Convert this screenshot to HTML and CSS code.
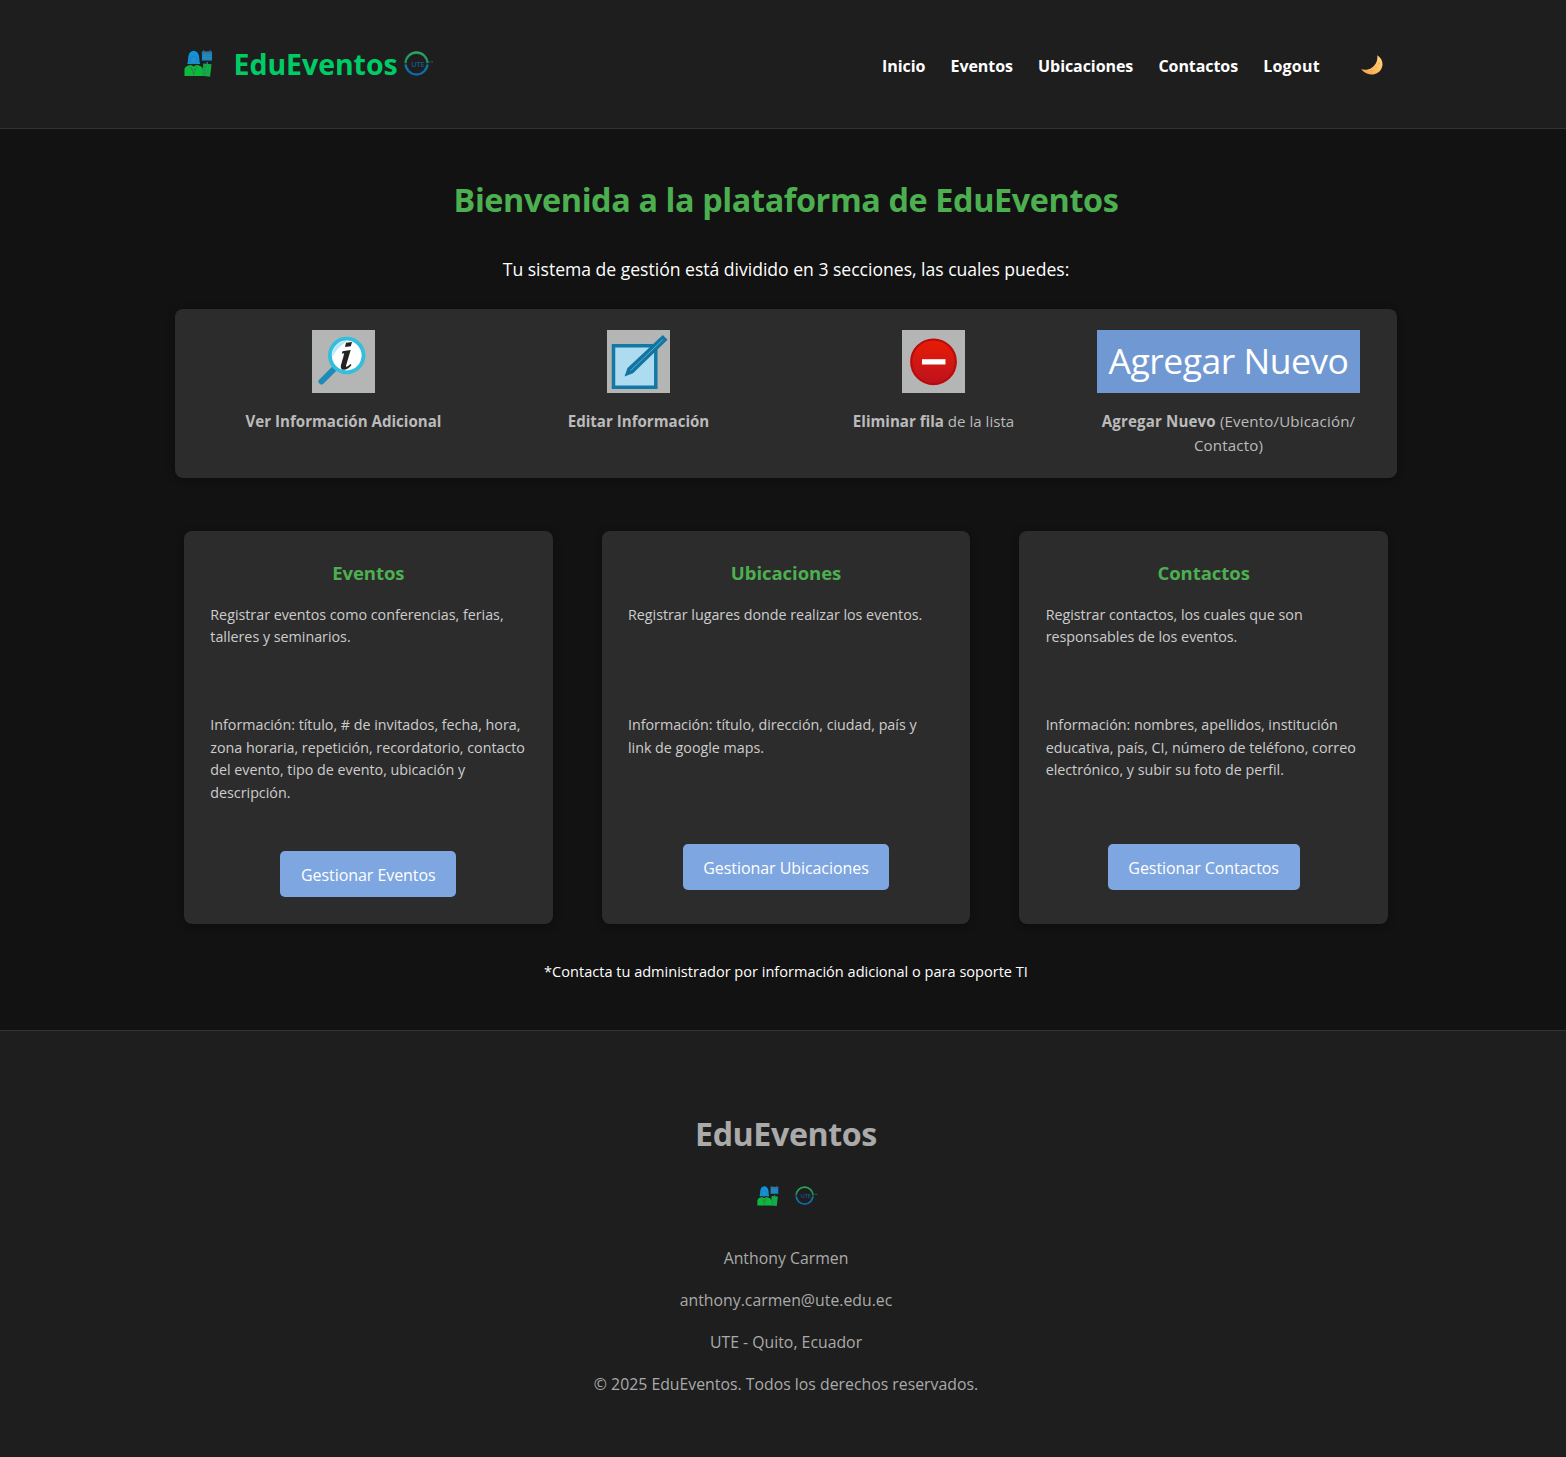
FILE: index.html
```html
<!DOCTYPE html>
<html lang="es">
<head>
<meta charset="utf-8">
<title>EduEventos</title>
<link rel="stylesheet" href="styles.css">
</head>
<body>
<svg class="defs" width="0" height="0" aria-hidden="true">
  <defs>
    <linearGradient id="ring" x1="0" y1="0" x2="0" y2="1">
      <stop offset="0" stop-color="#2aa65c"/><stop offset=".45" stop-color="#1b8c68"/>
      <stop offset=".6" stop-color="#1474a0"/><stop offset="1" stop-color="#0b69ab"/>
    </linearGradient>
    <linearGradient id="moon" x1="0" y1="1" x2="1" y2="0">
      <stop offset="0" stop-color="#f79a4c"/><stop offset=".6" stop-color="#ffc666"/><stop offset="1" stop-color="#ffd584"/>
    </linearGradient>
    <linearGradient id="red" x1="0" y1="0" x2="0" y2="1">
      <stop offset="0" stop-color="#e81c04"/><stop offset="1" stop-color="#bd1220"/>
    </linearGradient>
  </defs>
  <symbol id="logo" viewBox="0 0 30 30">
    <path d="M3.300 15.500C4.500 13 4 10 4.500 7.500 5.200 4 7 1.700 10 1.700s5 2.300 5.600 5.800c.5 2.500 0 5.500 1.200 8z" fill="#0d92dc"/>
    <path d="M6.500 9.500c2-.5 3-1.500 3.500-2.500.8 1.200 2 2 3.500 2.500 0 3.500-1.500 6-3.500 6s-3.500-2.500-3.500-6z" fill="#1e8fd2" stroke="#46697c" stroke-width=".6"/>
    <path d="M.5 28v-6.500c0-2.500 1.500-4 6.500-5.300l3 2 3-2c5 1.300 6.500 2.800 6.500 5.300V28z" fill="#0cba3b"/>
    <path d="M6.500 17 10 26l3.500-9M10 26v2M7 20l3 1.500 3-1.500" fill="none" stroke="#3d7350" stroke-width=".8"/>
    <path d="M18.500 2.500h10.500v9.500h-10.500z" fill="#1685cf"/>
    <path d="M18.500 4H29M20.500 1v3M27 1v3" stroke="#506a7a" stroke-width="1"/>
    <path d="M20 9.500h3M24 9.500h3M20.500 7h2M24.500 6.500h2" stroke="#568b65" stroke-width="1.200"/>
    <path d="m20 15 8.500.8-1.500 13-8.500-1z" fill="#12ad42"/>
    <path d="M24 13.500v2.300M20.800 18.500l1.500.2M20.500 21.800l1.500.2M20 25l1.500.2" stroke="#3e6d9a" stroke-width="1.500"/>
  </symbol>
</svg>

<header class="header">
  <div class="header-inner">
    <div class="brand">
      <svg class="brand-logo"><use href="#logo"/></svg>
      <span class="brand-name">EduEventos</span>
      <svg class="brand-ute" viewBox="0 0 30 26">
        <circle cx="12.500" cy="12.500" r="11" fill="none" stroke="url(#ring)" stroke-width="2.300"/>
        <path d="M0 12.800h3M22 12.800h3" stroke="#1e1e1e" stroke-width="1.200"/>
        <text x="7.200" y="15.500" class="ute-text">UTE</text>
        <path d="M25.300 10.900h3.800" stroke="#255e39" stroke-width="1.400" stroke-dasharray="1.600 .5"/>
      </svg>
    </div>
    <nav class="nav">
      <a>Inicio</a><a>Eventos</a><a>Ubicaciones</a><a>Contactos</a><a class="nav-last">Logout</a>
      <svg class="moon" viewBox="0 0 22 20"><path d="M16.200.3c4.500 2.500 6.700 8 4.400 13C18.500 18 13.500 20.500 8.500 19.300 4.800 18.500 1.500 16.500.3 14c2.700 1.200 7 .9 10.400-1.300C15 10 17 5.500 16.200.3z" fill="url(#moon)"/><path d="M14.500 12l1 .8M10.500 15.500l1 .3M18 8v1" stroke="#eda44c" stroke-linecap="round"/></svg>
    </nav>
  </div>
</header>

<main class="main">
  <h1 class="title">Bienvenida a la plataforma de EduEventos</h1>
  <p class="subtitle">Tu sistema de gestión está dividido en 3 secciones, las cuales puedes:</p>

  <section class="panel">
    <div class="action">
      <svg class="action-icon" viewBox="0 0 63 63">
        <path d="M9.500 51.500 23 38" stroke="#1d8bba" stroke-width="6" stroke-linecap="round"/>
        <circle cx="34.700" cy="25.500" r="16.800" fill="#fff" stroke="#32bfdd" stroke-width="3.800"/>
        <path d="M20.300 27A14.800 14.800 0 0 1 36 10.800C30 14 24 20 20.300 27z" fill="#b9e7f7"/>
        <path d="m34 12.800 6-.8-1.200 4.300-5.800.8zM30.500 21.300l8.200-1.300-4.700 15.700c-.3 1.800 1.700 1.200 4.300-1.700l1.200 1c-3.200 4.700-10.700 7-10.700 1.700 0-1.800 2.700-9.500 3.400-13.400l-2.400.4z" fill="#222"/>
      </svg>
      <p class="caption"><strong>Ver Información Adicional</strong></p>
    </div>
    <div class="action">
      <svg class="action-icon" viewBox="0 0 63 63">
        <path d="M6.500 15.800h42.300v41.500H6.500z" fill="#addcf0" stroke="#1478a5" stroke-width="3.500"/>
        <path d="M17.500 46.500 20.500 38 55.800 5l4.700 4.700L26 43.200z" fill="#1275a1"/>
        <path d="M23.500 40.500 56 9.500" stroke="#5badcb" stroke-width="1"/>
      </svg>
      <p class="caption"><strong>Editar Información</strong></p>
    </div>
    <div class="action">
      <svg class="action-icon" viewBox="0 0 63 63">
        <circle cx="31.500" cy="31.800" r="22.300" fill="url(#red)" stroke="#b90b0b" stroke-width="2.200"/>
        <path d="M20 29.200h23.500v5.300H20z" fill="#fff"/>
      </svg>
      <p class="caption"><strong>Eliminar fila</strong> de la lista</p>
    </div>
    <div class="action">
      <div class="add-banner">Agregar Nuevo</div>
      <p class="caption caption-wide"><strong>Agregar Nuevo</strong> (Evento/Ubicación/<br>Contacto)</p>
    </div>
  </section>

  <section class="cards">
    <article class="card">
      <h2 class="card-title">Eventos</h2>
      <p class="card-text card-desc">Registrar eventos como conferencias, ferias,<br>talleres y seminarios.</p>
      <p class="card-text card-info">Información: título, # de invitados, fecha, hora,<br>zona horaria, repetición, recordatorio, contacto<br>del evento, tipo de evento, ubicación y<br>descripción.</p>
      <a class="button">Gestionar Eventos</a>
    </article>
    <article class="card">
      <h2 class="card-title">Ubicaciones</h2>
      <p class="card-text card-desc">Registrar lugares donde realizar los eventos.</p>
      <p class="card-text card-info">Información: título, dirección, ciudad, país y<br>link de google maps.</p>
      <a class="button">Gestionar Ubicaciones</a>
    </article>
    <article class="card">
      <h2 class="card-title">Contactos</h2>
      <p class="card-text card-desc">Registrar contactos, los cuales que son<br>responsables de los eventos.</p>
      <p class="card-text card-info">Información: nombres, apellidos, institución<br>educativa, país, CI, número de teléfono, correo<br>electrónico, y subir su foto de perfil.</p>
      <a class="button">Gestionar Contactos</a>
    </article>
  </section>

  <p class="note">*Contacta tu administrador por información adicional o para soporte TI</p>
</main>

<footer class="footer">
  <h2 class="footer-title">EduEventos</h2>
  <div class="footer-logos">
    <svg class="footer-logo"><use href="#logo"/></svg>
    <svg class="footer-ute" viewBox="0 0 30 26">
      <circle cx="12.500" cy="12.500" r="11" fill="none" stroke="url(#ring)" stroke-width="2.300"/>
      <path d="M0 12.800h3M22 12.800h3" stroke="#1e1e1e" stroke-width="1.200"/>
      <text x="7.200" y="15.500" class="ute-text">UTE</text>
      <path d="M25.300 10.900h3.800" stroke="#255e39" stroke-width="1.400" stroke-dasharray="1.600 .5"/>
    </svg>
  </div>
  <p class="footer-line">Anthony Carmen</p>
  <p class="footer-line">anthony.carmen@ute.edu.ec</p>
  <p class="footer-line">UTE - Quito, Ecuador</p>
  <p class="footer-line">© 2025 EduEventos. Todos los derechos reservados.</p>
</footer>
</body>
</html>
```
FILE: styles.css
```css
* { box-sizing: border-box; margin: 0; padding: 0; }
body { background: #121212; color: #fff; font-family: "Open Sans", "Noto Sans", sans-serif; font-size: 16px; }
svg { display: block; flex: none; }
.defs { height: 0; }
.ute-text { font: 600 7.5px "Open Sans", sans-serif; letter-spacing: -.2px; fill: #125c8f; }

.header { height: 129px; background: #1e1e1e; border-bottom: 1px solid #333; padding: 0 177px 0 184px; }
.header-inner { height: 128px; display: flex; justify-content: space-between; align-items: center; }
.brand { display: flex; align-items: center; }
.brand-logo { width: 29px; height: 29px; margin-right: 20.500px; margin-top: -2px; }
.brand-name { width: 170px; font-size: 28.500px; font-weight: 700; line-height: 40px; letter-spacing: -.05px; color: #00cc66; white-space: nowrap; }
.brand-ute { width: 30px; height: 26px; margin-left: .5px; }
.nav { display: flex; align-items: center; gap: 25.200px; padding: 3px 6px 0 0; font-size: 16px; font-weight: 700; letter-spacing: -.07px; }
.nav-last { letter-spacing: .2px; }
.moon { width: 22px; height: 20px; margin-left: 16px; margin-top: -1px; }

.main { height: 901px; padding-left: 6px; display: flex; flex-direction: column; align-items: center; }
.title { margin-top: 46px; line-height: 48px; font-size: 32.400px; letter-spacing: -.4px; color: #4caf50; }
.subtitle { margin-top: 32px; line-height: 28px; font-size: 17.600px; letter-spacing: -.02px; }

.panel { margin-top: 26px; width: 1222px; height: 169px; padding: 21px; display: grid; grid-template-columns: repeat(4, 1fr); background: #2c2c2c; border-radius: 8px; box-shadow: 0 2px 8px rgba(0, 0, 0, .3); }
.action { display: flex; flex-direction: column; align-items: center; }
.action-icon { width: 63px; height: 63px; background: #b4b6b5; }
.add-banner { width: 263px; height: 63px; background: #7099d3; font-size: 35.500px; line-height: 61px; letter-spacing: -.5px; text-align: center; }
.caption { margin-top: 16px; line-height: 24px; font-size: 15.100px; color: #bbb; text-align: center; white-space: nowrap; }
.caption-wide { letter-spacing: .15px; }

.cards { margin-top: 53px; width: 1204px; display: grid; grid-template-columns: repeat(3, 1fr); gap: 49px; }
.card { height: 393px; padding: 26px; display: flex; flex-direction: column; align-items: center; background: #2c2c2c; border-radius: 8px; box-shadow: 0 2px 8px rgba(0, 0, 0, .3); }
.card-title { margin: 2px 0 16.500px; line-height: 28px; font-size: 18.500px; letter-spacing: -.05px; color: #4caf50; }
.card-text { align-self: stretch; padding-left: .3px; line-height: 22.700px; font-size: 14.300px; letter-spacing: -.01px; color: #ccc; white-space: nowrap; }
.card-desc { min-height: 110.300px; }
.card-info { min-height: 84px; margin-bottom: 46.200px; }
.button { height: 46.500px; padding: 0 20.700px; line-height: 48.500px; font-size: 16px; letter-spacing: -.06px; background: #7ea6e0; border-radius: 5px; }

.note { margin-top: 35px; line-height: 24px; font-size: 14.550px; }

.footer { height: 427px; padding-left: 6px; background: #1e1e1e; border-top: 1px solid #333; color: #aaa; display: flex; flex-direction: column; align-items: center; }
.footer-title { margin-top: 79px; line-height: 48px; font-size: 32.200px; letter-spacing: -.4px; }
.footer-logos { display: flex; align-items: center; gap: 16px; height: 22px; margin: 27px 0 39px 3px; }
.footer-logo { width: 22px; height: 22px; }
.footer-ute { width: 23px; height: 20px; }
.footer-line { margin-bottom: 18px; line-height: 24px; font-size: 15.800px; letter-spacing: .01px; }
```
